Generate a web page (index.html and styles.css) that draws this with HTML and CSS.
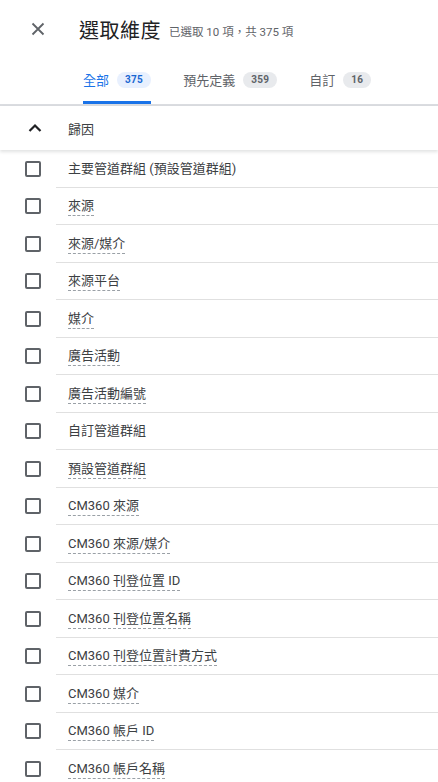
FILE: index.html
```html
<!DOCTYPE html>
<html lang="zh-Hant">
<head>
    <meta charset="UTF-8">
    <meta name="viewport" content="width=device-width, initial-scale=1.0">
    <title>選取維度</title>
    <link rel="stylesheet" href="styles.css">
</head>
<body>
    <div class="panel">
        <div class="top">
            <span class="close">
                <svg width="14" height="14" viewBox="0 0 14 14"><path d="M1.5 1.5 L12.5 12.5 M12.5 1.5 L1.5 12.5" stroke="#5f6368" stroke-width="1.8" fill="none"/></svg>
            </span>
            <h1 class="title">選取維度</h1>
            <span class="sub">已選取 10 項，共 375 項</span>
        </div>

        <div class="tabs">
            <div class="tab active">全部<span class="badge">375</span></div>
            <div class="tab">預先定義<span class="badge">359</span></div>
            <div class="tab">自訂<span class="badge">16</span></div>
        </div>

        <div class="group">
            <span class="chev">
                <svg width="14" height="10" viewBox="0 0 14 10"><path d="M1.5 8 L7 2.5 L12.5 8" stroke="#202124" stroke-width="2.2" fill="none"/></svg>
            </span>
            <span class="group-name">歸因</span>
        </div>

        <ul class="list">
            <li class="row"><span class="box"></span><span class="label plain">主要管道群組 (預設管道群組)</span></li>
            <li class="row"><span class="box"></span><span class="label">來源</span></li>
            <li class="row"><span class="box"></span><span class="label">來源/媒介</span></li>
            <li class="row"><span class="box"></span><span class="label">來源平台</span></li>
            <li class="row"><span class="box"></span><span class="label">媒介</span></li>
            <li class="row"><span class="box"></span><span class="label">廣告活動</span></li>
            <li class="row"><span class="box"></span><span class="label">廣告活動編號</span></li>
            <li class="row"><span class="box"></span><span class="label plain">自訂管道群組</span></li>
            <li class="row"><span class="box"></span><span class="label">預設管道群組</span></li>
            <li class="row"><span class="box"></span><span class="label">CM360 來源</span></li>
            <li class="row"><span class="box"></span><span class="label">CM360 來源/媒介</span></li>
            <li class="row"><span class="box"></span><span class="label">CM360 刊登位置 ID</span></li>
            <li class="row"><span class="box"></span><span class="label">CM360 刊登位置名稱</span></li>
            <li class="row"><span class="box"></span><span class="label">CM360 刊登位置計費方式</span></li>
            <li class="row"><span class="box"></span><span class="label">CM360 媒介</span></li>
            <li class="row"><span class="box"></span><span class="label">CM360 帳戶 ID</span></li>
            <li class="row"><span class="box"></span><span class="label">CM360 帳戶名稱</span></li>
        </ul>
    </div>
</body>
</html>
```

FILE: styles.css
```css
body {
    margin: 0;
    padding: 0;
    background: #fff;
    font-family: Roboto, "Noto Sans CJK TC", "Noto Sans", sans-serif;
    color: #3c4043;
    overflow: hidden;
}
.panel {
    width: 438px;
}
.top {
    display: flex;
    align-items: center;
    height: 58px;
}
.close {
    display: flex;
    align-items: center;
    justify-content: center;
    width: 24px;
    height: 24px;
    margin-left: 26px;
}
.title {
    margin: 0 0 0 29px;
    font-size: 20px;
    font-weight: 400;
    color: #202124;
    letter-spacing: 0.5px;
}
.sub {
    margin-left: 8px;
    margin-top: 4px;
    font-size: 11.5px;
    color: #5f6368;
}
.tabs {
    display: flex;
    gap: 32px;
    padding-left: 83px;
    border-bottom: 2px solid #dadce0;
    box-sizing: border-box;
    height: 48px;
}
.tab {
    display: flex;
    align-items: center;
    gap: 8px;
    font-size: 13px;
    color: #5f6368;
    border-bottom: 3px solid transparent;
    padding-top: 0;
}
.tab.active {
    color: #1a73e8;
    border-bottom-color: #1a73e8;
}
.badge {
    display: inline-block;
    font-size: 10px;
    font-weight: 700;
    line-height: 16px;
    padding: 0 8px;
    border-radius: 8px;
    background: #e8eaed;
    color: #5f6368;
    letter-spacing: 0.3px;
}
.tab.active .badge {
    background: #e8f0fe;
    color: #1967d2;
}
.group {
    display: flex;
    align-items: center;
    height: 44px;
    box-shadow: 0 2px 3px rgba(60, 64, 67, 0.15);
    position: relative;
}
.chev {
    display: flex;
    justify-content: center;
    width: 24px;
    margin-left: 23px;
}
.group-name {
    margin-left: 21px;
    font-size: 13px;
    color: #3c4043;
}
.list {
    list-style: none;
    margin: 0;
    padding: 0;
}
.row {
    display: flex;
    align-items: center;
    height: 37.5px;
    box-sizing: border-box;
    position: relative;
}
.row::after {
    content: "";
    position: absolute;
    left: 56px;
    right: 0;
    bottom: 0;
    border-bottom: 1px solid #e0e0e0;
}
.box {
    width: 12px;
    height: 12px;
    margin-left: 25px;
    border: 2px solid #5f6368;
    border-radius: 2px;
}
.label {
    margin-left: 27px;
    font-size: 13px;
    color: #3c4043;
    line-height: 16px;
    padding-bottom: 1px;
    border-bottom: 1px dashed #9aa0a6;
    margin-top: 2px;
}
.label.plain {
    border-bottom-color: transparent;
}
```
